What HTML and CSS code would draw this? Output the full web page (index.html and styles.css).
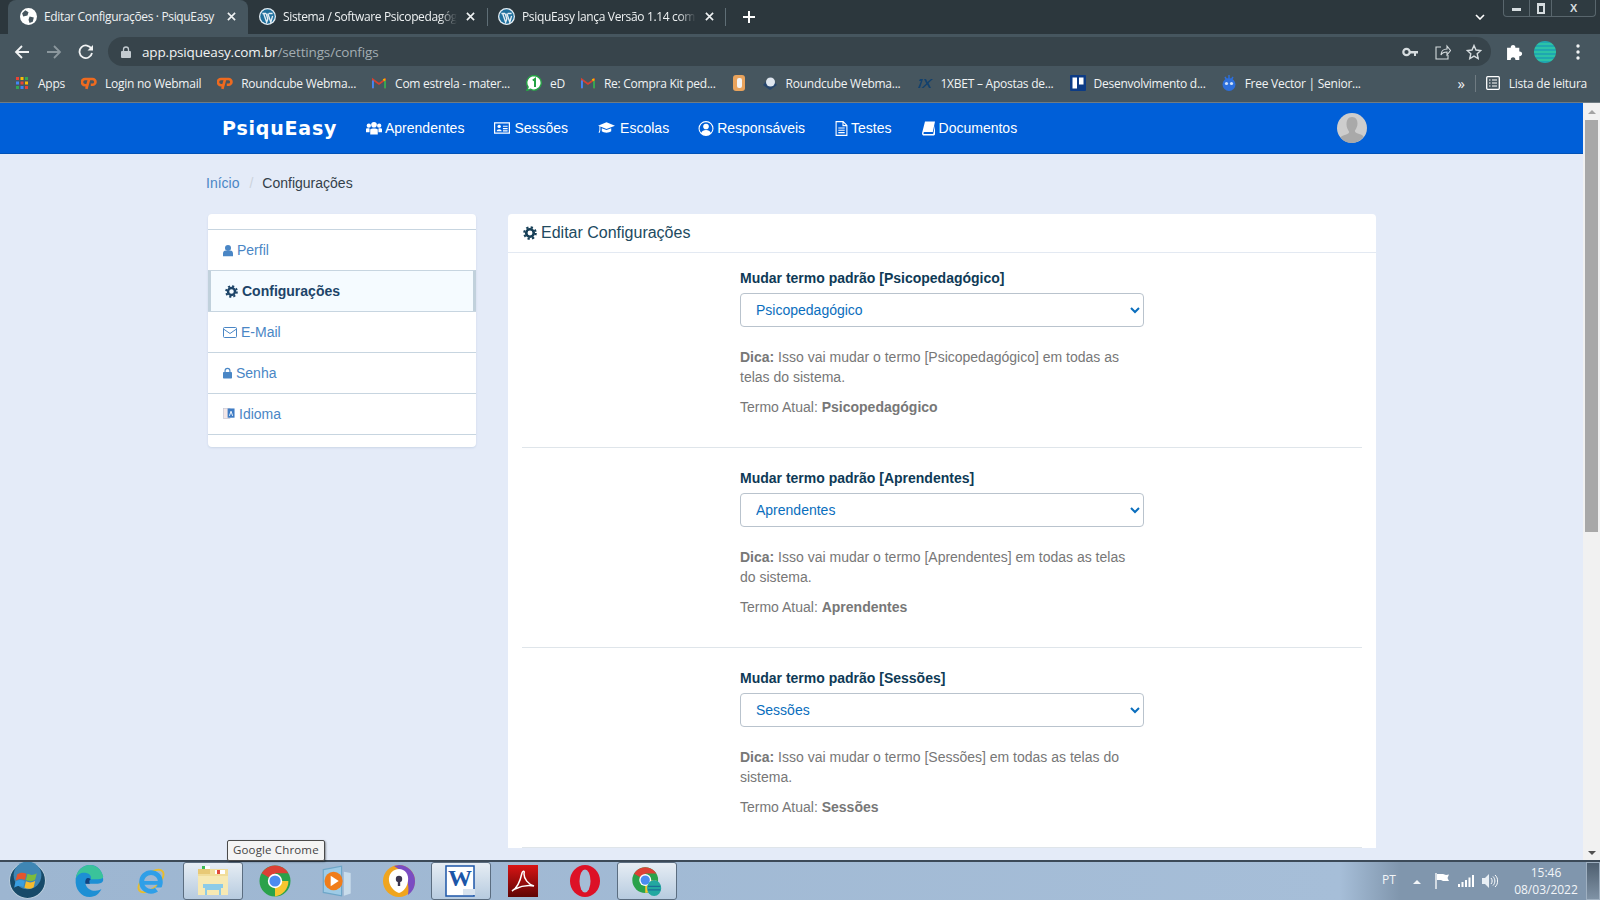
FILE: index.html
```html
<!DOCTYPE html>
<html lang="en">
<head>
    <meta charset="UTF-8">
    <meta name="viewport" content="width=device-width, initial-scale=1.0">
    <title>Editar Configurações · PsiquEasy</title>
    <link rel="stylesheet" href="styles.css">
</head>
<body>

<svg class="sprites" aria-hidden="true">
    <symbol id="i-wp" viewBox="0 0 16 16">
        <circle cx="8" cy="8" r="8" fill="#e4eef5"/>
        <circle cx="8" cy="8" r="6.800" fill="#1f6f9c"/>
        <path d="M3.200 5.200h3.400M9.200 5.200h3.600M4.400 5.200l2.800 8.200 1.100-3-1.500-5.200M8.300 5.200l2.800 8.200 1.700-6" stroke="#e4eef5" stroke-width="1.300" fill="none"/>
    </symbol>
    <symbol id="i-cp" viewBox="0 0 18 14">
        <path d="M8 2.500H4.500a3.500 3.500 0 0 0 0 7H7M6 13.500L9.200 2.500h3.800a3.200 3.200 0 0 1 0 6.500h-2" stroke="#ee6a1f" stroke-width="3" fill="none"/>
    </symbol>
    <symbol id="i-gm" viewBox="0 0 16 12">
        <path d="M1 12V2l7 5 7-5v10" fill="none" stroke="#d8402f" stroke-width="2"/>
        <path d="M1 12V3" stroke="#4285f4" stroke-width="2.400"/>
        <path d="M15 12V3" stroke="#34a853" stroke-width="2.400"/>
        <path d="M13 3l2-1.500" stroke="#f4b400" stroke-width="2.400"/>
    </symbol>
    <symbol id="i-chrome" viewBox="0 0 32 32">
        <circle cx="16" cy="16" r="15.500" fill="#2aa24a"/>
        <path d="M16 16L2.600 8.300A15.500 15.500 0 0 1 29.400 8.200H16z" fill="#dc4035"/>
        <path d="M16 16h13.400A15.500 15.500 0 0 1 16 31.500z" fill="#f7c62f"/>
        <circle cx="16" cy="16" r="7.200" fill="#fff"/>
        <circle cx="16" cy="16" r="5.600" fill="#4b8bf0"/>
    </symbol>
    <symbol id="i-cog" viewBox="0 0 16 16">
        <circle cx="8" cy="8" r="4.300" fill="none" stroke="currentColor" stroke-width="3"/>
        <circle cx="8" cy="8" r="6.600" fill="none" stroke="currentColor" stroke-width="2.400" stroke-dasharray="2.600 2.580"/>
    </symbol>
    <symbol id="i-user" viewBox="0 0 12 14">
        <circle cx="6" cy="4" r="3.600" fill="currentColor"/>
        <path d="M0 14v-3.500C0 8.500 1.500 7 3 7c1 .8 5 .8 6 0 1.500 0 3 1.500 3 3.500V14z" fill="currentColor"/>
    </symbol>
</svg>

<div class="browser-tabs">
    <div class="tab tab-active">
        <svg class="tab-icon" viewBox="0 0 16 16"><circle cx="8" cy="8" r="8" fill="#fff"/><path d="M5 2l3 2-1 3-4 1-1-3zM9 8l4 1-1 4-3 1-1-3z" fill="#46565f"/></svg>
        <span class="tab-title">Editar Configurações · PsiquEasy</span>
        <svg class="tab-close" viewBox="0 0 10 10"><path d="M1 1l8 8M9 1l-8 8"/></svg>
    </div>
    <div class="tab">
        <svg class="tab-icon"><use href="#i-wp"/></svg>
        <span class="tab-title tab-fade">Sistema / Software Psicopedagógico</span>
        <svg class="tab-close" viewBox="0 0 10 10"><path d="M1 1l8 8M9 1l-8 8"/></svg>
    </div>
    <div class="tab tab-sep">
        <svg class="tab-icon"><use href="#i-wp"/></svg>
        <span class="tab-title tab-fade">PsiquEasy lança Versão 1.14 com novidades</span>
        <svg class="tab-close" viewBox="0 0 10 10"><path d="M1 1l8 8M9 1l-8 8"/></svg>
    </div>
    <svg class="tab-plus" viewBox="0 0 12 12"><path d="M6 0v12M0 6h12"/></svg>
    <svg class="tab-list" viewBox="0 0 10 6"><path d="M1 1l4 4 4-4"/></svg>
    <div class="win-buttons">
        <span class="win-btn win-min"><i></i></span>
        <span class="win-btn win-max"><i></i></span>
        <span class="win-btn win-close">X</span>
    </div>
</div>

<div class="toolbar">
    <svg class="tool-nav" viewBox="0 0 16 16"><path d="M15 8H2M8 2L2 8l6 6"/></svg>
    <svg class="tool-nav tool-off" viewBox="0 0 16 16"><path d="M1 8h13M8 2l6 6-6 6"/></svg>
    <svg class="tool-nav" viewBox="0 0 16 16"><path d="M13.500 5A6.300 6.300 0 1 0 14 9"/><path class="solid" d="M15 1v5.500H9.500z"/></svg>
    <div class="omnibox">
        <svg class="omni-lock" viewBox="0 0 10 12"><path d="M2.500 5V3.500a2.500 2.500 0 0 1 5 0V5" fill="none" stroke="#c3cbd0" stroke-width="1.300"/><rect y="5" width="10" height="7" rx="1" fill="#c3cbd0"/></svg>
        <span class="omni-url">app.psiqueasy.com.br<span class="omni-path">/settings/configs</span></span>
        <svg class="omni-key" viewBox="0 0 16 10"><circle cx="4.500" cy="5" r="3.200" fill="none" stroke="#d6dcdf" stroke-width="2.200"/><path d="M8 4h8v2.500h-2V9h-2V6.500H8z" fill="#d6dcdf"/></svg>
        <svg class="omni-share" viewBox="0 0 16 16"><path d="M6 3H1v12h12v-4M6 11c0-4 3-6 6-6V2l3.500 4.500L12 11V8c-3 0-5 1-6 3z"/></svg>
        <svg class="omni-star" viewBox="0 0 16 16"><path d="M8 1.500l2 4.500 4.800.5-3.600 3.200 1 4.800L8 12.100 3.800 14.500l1-4.800L1.200 6.500 6 6z"/></svg>
    </div>
    <svg class="tool-puzzle" viewBox="0 0 16 16"><path d="M1 4.500h3.500a2.200 2.200 0 1 1 4.300 0H12.500V8a2.200 2.200 0 1 1 0 4.300V16H8.800a2.200 2.200 0 1 0-4.300 0H1z" fill="#fff"/></svg>
    <span class="tool-avatar"></span>
    <svg class="tool-dots" viewBox="0 0 4 16"><circle cx="2" cy="2" r="1.700"/><circle cx="2" cy="8" r="1.700"/><circle cx="2" cy="14" r="1.700"/></svg>
</div>

<div class="bookmarks">
    <a class="bm">
        <svg class="bm-icon" viewBox="0 0 14 14"><path d="M1 1h3v3H1z" fill="#ea4335"/><path d="M5.500 1h3v3h-3z" fill="#fbbc04"/><path d="M10 1h3v3h-3z" fill="#34a853"/><path d="M1 5.500h3v3H1z" fill="#4285f4"/><path d="M5.500 5.500h3v3h-3z" fill="#ea4335"/><path d="M10 5.500h3v3h-3z" fill="#fbbc04"/><path d="M1 10h3v3H1z" fill="#34a853"/><path d="M5.500 10h3v3h-3z" fill="#4285f4"/><path d="M10 10h3v3h-3z" fill="#ea4335"/></svg>Apps
    </a>
    <a class="bm"><svg class="bm-icon bm-wide"><use href="#i-cp"/></svg>Login no Webmail</a>
    <a class="bm"><svg class="bm-icon bm-wide"><use href="#i-cp"/></svg>Roundcube Webma...</a>
    <a class="bm"><svg class="bm-icon"><use href="#i-gm"/></svg>Com estrela - mater...</a>
    <a class="bm"><svg class="bm-icon bm-wide bm-tall" viewBox="0 0 16 16"><path d="M8 .5a7.300 7.300 0 1 1-3.600 13.700L.8 15.500l1.300-3.500A7.300 7.300 0 0 1 8 .5z" fill="#fff" stroke="#25a244" stroke-width="1.400"/><path d="M6.800 5.500L9 4v8" stroke="#25a244" stroke-width="2" fill="none"/></svg>eD</a>
    <a class="bm"><svg class="bm-icon"><use href="#i-gm"/></svg>Re: Compra Kit ped...</a>
    <a class="bm bm-iconly"><svg class="bm-icon bm-tall" viewBox="0 0 14 16"><rect x="1" width="12" height="16" rx="3" fill="#e9a35c"/><rect x="5" y="3" width="5" height="10" rx="2" fill="#f3f3f3"/></svg></a>
    <a class="bm"><svg class="bm-icon bm-wide bm-tall" viewBox="0 0 16 16"><path d="M1 10l7-8 7 8-7 5z" fill="#26456b"/><circle cx="8.500" cy="7" r="4.500" fill="#dfe6ee"/></svg>Roundcube Webma...</a>
    <a class="bm"><svg class="bm-icon bm-wide" viewBox="0 0 16 12"><path d="M1 11l3-7H2l1-2h3L3 11zM7 2h2l1.500 3L14 2h2l-4.500 4L14 11h-2l-1.800-3.500L6.500 11h-2l4.800-4.500z" fill="#12416e"/></svg>1XBET – Apostas de...</a>
    <a class="bm"><svg class="bm-icon bm-wide bm-tall" viewBox="0 0 16 16"><rect width="16" height="16" rx="1" fill="#0c3b85"/><rect x="2.500" y="2.500" width="4.500" height="11" fill="#fff"/><rect x="9" y="2.500" width="4.500" height="7" fill="#fff"/></svg>Desenvolvimento d...</a>
    <a class="bm"><svg class="bm-icon bm-tall" viewBox="0 0 14 16"><circle cx="7" cy="9.500" r="6.500" fill="#2d6fdc"/><path d="M7 3V0M3 2l1.500 2.500M11 2L9.500 4.500" stroke="#2d6fdc" stroke-width="1.500"/><circle cx="4.500" cy="8.500" r="1.600" fill="#cfe0fb"/><circle cx="9.500" cy="8.500" r="1.600" fill="#cfe0fb"/></svg>Free Vector | Senior...</a>
    <span class="bm-more">»</span>
    <span class="bm-sep"></span>
    <a class="bm bm-reading"><svg class="bm-icon" viewBox="0 0 14 14"><rect x=".7" y=".7" width="12.600" height="12.600" rx="1" fill="none" stroke="#fff" stroke-width="1.300"/><path d="M3 4h1.500M6 4h5M3 7h1.500M6 7h5M3 10h1.500M6 10h5" stroke="#fff" stroke-width="1.200"/></svg>Lista de leitura</a>
</div>

<div class="viewport">
    <div class="page">
        <nav class="topnav">
            <span class="logo">PsiquEasy</span>
            <a class="nav-link">
                <svg class="nav-icon" viewBox="0 0 17 14"><circle cx="8.500" cy="3.500" r="3"/><circle cx="3" cy="4.500" r="2.300"/><circle cx="14" cy="4.500" r="2.300"/><path d="M4.500 8.500c1-1.200 7-1.200 8 0V14h-8zM0 8c.6-.8 3.300-.8 3.800-.3v3.800H0zM13.200 7.700c.5-.5 3.200-.5 3.800.3v3.500h-3.800z"/></svg>Aprendentes
            </a>
            <a class="nav-link">
                <svg class="nav-icon nav-icon-card" viewBox="0 0 17 14"><path fill-rule="evenodd" d="M0 1h17v12H0zM1.300 2.300v9.400h14.400V2.300z"/><circle cx="5.500" cy="5.300" r="1.800"/><path d="M2.800 10.500c0-3 5.400-3 5.400 0zM9.500 4.500h5v1.200h-5zM9.500 7h5v1.200h-5zM9.500 9.500h5v1.200h-5z"/></svg>Sessões
            </a>
            <a class="nav-link nav-link-school">
                <svg class="nav-icon nav-icon-cap" viewBox="0 0 18 14"><path d="M9 1l9 3.500L9 8 2.500 5.500v3.800L1.800 12H.6l.9-2.700V5.100L0 4.500z"/><path d="M4 7.200v3.300c2 2 8 2 10 0V7.200L9 9.200z"/></svg>Escolas
            </a>
            <a class="nav-link">
                <svg class="nav-icon nav-icon-tight" viewBox="0 0 16 16"><path fill-rule="evenodd" d="M8 0a8 8 0 1 1 0 16A8 8 0 0 1 8 0zM8 1.300a6.700 6.700 0 0 0-5 11.200c.8-2 2.500-3 5-3s4.200 1 5 3A6.700 6.700 0 0 0 8 1.300z"/><circle cx="8" cy="5.800" r="3"/></svg>Responsáveis
            </a>
            <a class="nav-link">
                <svg class="nav-icon nav-icon-file" viewBox="0 0 12 15"><path d="M.6.600h7l3.800 3.800v10H.6zM7.500.600v4h4M2.800 7h6.400M2.800 9.300h6.400M2.800 11.600h6.400" fill="none" stroke="#fff" stroke-width="1.100"/></svg>Testes
            </a>
            <a class="nav-link">
                <svg class="nav-icon nav-icon-book" viewBox="0 0 13 14"><path d="M3 0h10l-2.200 10.500H3C1.500 10.500 1 11.500 1.800 12.500h9.400L13 4v9l-1 1H2C.5 14-.3 12.500.2 11z"/></svg>Documentos
            </a>
            <span class="nav-avatar"><svg viewBox="0 0 30 30"><circle cx="15" cy="15" r="15" fill="#cdcdcd"/><path d="M15 4c3.600 0 5.500 2.800 5.500 6.200 0 3-1.200 5.600-2.500 7.200-.5 1.500 1 2.800 5 3.800 2 .6 3 1.500 3.500 2.500A15 15 0 0 1 15 30 15 15 0 0 1 3.500 24.700c.5-1 1.500-1.900 3.500-2.500 4-1 5.500-2.300 5-3.800-1.300-1.600-2.500-4.200-2.500-7.200C9.500 6.800 11.400 4 15 4z" fill="#a9a9a9"/></svg></span>
        </nav>

        <div class="breadcrumb">
            <a>Início</a><span class="crumb-sep">/</span><span class="crumb-current">Configurações</span>
        </div>

        <div class="settings">
            <aside class="side-menu">
                <ul>
                    <li><svg class="side-icon"><use href="#i-user"/></svg>Perfil</li>
                    <li class="active"><svg class="side-icon side-cog"><use href="#i-cog"/></svg>Configurações</li>
                    <li><svg class="side-icon side-mail" viewBox="0 0 14 11"><rect x=".5" y=".5" width="13" height="10" rx="1" fill="none" stroke="currentColor"/><path d="M.5 2l6.500 4.500L13.500 2" fill="none" stroke="currentColor"/></svg>E-Mail</li>
                    <li><svg class="side-icon side-lock" viewBox="0 0 10 12"><path d="M2.300 5.500V3.500a2.700 2.700 0 0 1 5.400 0v2" fill="none" stroke="currentColor" stroke-width="1.300"/><rect y="5" width="10" height="7" rx=".8" fill="currentColor"/></svg>Senha</li>
                    <li><svg class="side-icon side-lang" viewBox="0 0 13 14"><rect x=".5" y="1" width="7" height="11" fill="#f4e7e7" stroke="#c9c9d6" stroke-width=".8"/><rect x="5" y="1" width="7.500" height="10" fill="#3f7cc4"/><path d="M7 9l1.700-5 1.700 5" fill="none" stroke="#fff"/></svg>Idioma</li>
                </ul>
            </aside>

            <section class="card">
                <h1 class="card-title"><svg class="card-cog"><use href="#i-cog"/></svg>Editar Configurações</h1>
                <div class="card-body">
                    <div class="setting">
                        <label class="setting-label">Mudar termo padrão [Psicopedagógico]</label>
                        <select class="setting-select"><option>Psicopedagógico</option></select>
                        <p class="setting-tip"><b>Dica:</b> Isso vai mudar o termo [Psicopedagógico] em todas as telas do sistema.</p>
                        <p class="setting-now">Termo Atual: <b>Psicopedagógico</b></p>
                    </div>
                    <div class="setting">
                        <label class="setting-label">Mudar termo padrão [Aprendentes]</label>
                        <select class="setting-select"><option>Aprendentes</option></select>
                        <p class="setting-tip"><b>Dica:</b> Isso vai mudar o termo [Aprendentes] em todas as telas do sistema.</p>
                        <p class="setting-now">Termo Atual: <b>Aprendentes</b></p>
                    </div>
                    <div class="setting">
                        <label class="setting-label">Mudar termo padrão [Sessões]</label>
                        <select class="setting-select"><option>Sessões</option></select>
                        <p class="setting-tip"><b>Dica:</b> Isso vai mudar o termo [Sessões] em todas as telas do sistema.</p>
                        <p class="setting-now">Termo Atual: <b>Sessões</b></p>
                    </div>
                </div>
            </section>
        </div>
    </div>

    <div class="scrollbar">
        <span class="sb-up"></span>
        <span class="sb-thumb"></span>
        <span class="sb-down"></span>
    </div>
</div>

<div class="taskbar">
    <span class="tb-tooltip">Google Chrome</span>
    <div class="tb-start">
        <svg viewBox="0 0 36 36">
            <circle cx="18" cy="18" r="17.500" fill="#174a69" stroke="#b9ccdc"/>
            <circle cx="18" cy="13" r="13.500" fill="#3f86b4"/>
            <path d="M8 12c3-2 6-2 9-.5l-1.500 6c-3-1.500-6-1.500-9 .5z" fill="#e4552d"/>
            <path d="M18 11.500c3 1.500 6 1.500 9-.5l-1.500 6c-3 2-6 2-9 .5z" fill="#7dbb3c"/>
            <path d="M6.300 19c3-2 6-2 9-.5L14 24.500c-3-1.500-6-1.500-9 .5z" fill="#3a9ee0"/>
            <path d="M16.500 18.800c3 1.500 6 1.500 9-.5L24 24.500c-3 2-6 2-9 .5z" fill="#f6bb2e"/>
        </svg>
    </div>
    <div class="tb-apps">
        <span class="tb-slot"><svg viewBox="0 0 32 36"><path d="M1 16C2 6 9 0 17 0c9 0 15 7 15 17 0 2-2 4-6 4H12c1 5 6 8 11 8 3 0 5-1 7-2-2 5-7 9-13 9C7 36 0 27 1 16z" fill="#1d8fd4"/><path d="M1 16C3 9 9 8 13 9c5 1 6 5 5 7h8c4 0 6-1 6-3C30 5 24 0 17 0 9 0 2 6 1 16z" fill="#3ac39a"/><path d="M12 21c-1-6 3-8 6-5-2 1-2 3-1 5z" fill="#12427e"/></svg></span>
        <span class="tb-slot"><svg viewBox="0 0 32 34"><ellipse cx="16" cy="17" rx="16" ry="8" transform="rotate(-40 16 17)" fill="none" stroke="#e9bd2b" stroke-width="2"/><circle cx="16" cy="18" r="10" fill="none" stroke="#2f9fe8" stroke-width="5"/><path d="M7 17h18v4H7z" fill="#2f9fe8"/><path d="M20 24l8 0-4 5z" fill="#a5bdd6"/></svg></span>
        <span class="tb-slot tb-open"><svg viewBox="0 0 32 32"><path d="M1 4h30v26H1z" fill="#f1dd9a"/><path d="M1 4h12v5H1z" fill="#e8c976"/><path d="M5 1h8v3H5z" fill="#fff"/><path d="M5 1h3v3H5z" fill="#3dbb54"/><path d="M18 5h10v4H18z" fill="#fff"/><path d="M20 5h3v4h-3z" fill="#e04a3c"/><path d="M1 11h30v19H1z" fill="#f7e9b3"/><path d="M6 19h20v4h-2v7h-2v-5H10v5H8v-7H6z" fill="#8ccbe8"/></svg></span>
        <span class="tb-slot"><svg><use href="#i-chrome"/></svg></span>
        <span class="tb-slot"><svg viewBox="0 0 28 28"><path d="M2 4l16-3v26L2 24z" fill="#9ecbe6" stroke="#6ea6c8"/><path d="M20 6l6 1v18l-6 2z" fill="#c8dceb"/><circle cx="11" cy="14" r="8" fill="#f07d1a"/><path d="M8.500 9.500l7 4.500-7 4.500z" fill="#fff"/></svg></span>
        <span class="tb-slot"><svg viewBox="0 0 32 32"><circle cx="16" cy="16" r="16" fill="#f0a51e"/><path d="M16 0a16 16 0 0 1 16 16c0 7-3 11-7 14 2-12-2-22-14-29z" fill="#7a4cc2"/><path d="M16 4c6 0 10 5 9 12-1 6-4 10-9 12-5-2-9-6-10-12C5 9 10 4 16 4z" fill="#fff"/><circle cx="16" cy="14" r="3.200" fill="#3a3550"/><path d="M14.800 15h2.400v6h-2.400z" fill="#3a3550"/></svg></span>
        <span class="tb-slot tb-open"><svg viewBox="0 0 32 32"><rect x="1" y="1" width="28" height="30" fill="#fff" stroke="#1c56a8" stroke-width="1.500"/><text class="tb-word" x="3" y="21">W</text><path d="M18 24h12v6H18z" fill="#d8e3ee"/></svg></span>
        <span class="tb-slot"><svg viewBox="0 0 30 32"><defs><linearGradient id="pdf-red" x1="0" y1="0" x2="0" y2="1"><stop offset="0" stop-color="#d91414"/><stop offset="1" stop-color="#5f0505"/></linearGradient></defs><rect width="30" height="32" fill="url(#pdf-red)"/><path d="M4 26c4-2 8-9 10-18 1-3 3-2 2 1 0 5 4 10 10 12-6-1-13 0-19 3z" fill="none" stroke="#fff" stroke-width="1.500"/></svg></span>
        <span class="tb-slot"><svg viewBox="0 0 30 32"><ellipse cx="15" cy="16" rx="15" ry="16" fill="#dd1126"/><ellipse cx="15" cy="16" rx="5.500" ry="11.500" fill="#a5bdd6"/></svg></span>
        <span class="tb-slot tb-open"><svg class="tb-chrome-user" viewBox="0 0 34 36"><use href="#i-chrome" width="30" height="30" y="2"/><ellipse cx="25" cy="26" rx="8" ry="9" fill="#23a8a0"/><path d="M18 24h14M18 28h14" stroke="#1a6f97" stroke-width="1.500"/></svg></span>
    </div>
    <div class="tb-tray">
        <span class="tray-lang">PT</span>
        <svg class="tray-caret" viewBox="0 0 10 6"><path d="M5 0l5 5H0z"/></svg>
        <svg class="tray-icon" viewBox="0 0 16 16"><path d="M2 0v16" stroke="#fff" stroke-width="1.300"/><path d="M3 1h6l3 1 3-.500-1.500 3.500L15 8H9L7 7H3z" fill="#fff"/></svg>
        <svg class="tray-icon" viewBox="0 0 16 12"><path d="M0 9h2v3H0zM3.500 7h2v5h-2zM7 5h2v7H7zM10.500 2.500h2V12h-2zM14 0h2v12h-2z" fill="#fff"/></svg>
        <svg class="tray-icon" viewBox="0 0 16 14"><path d="M0 4h3l4-4v14l-4-4H0z" fill="#e8eef4"/><path d="M9 4c1.500 1.500 1.500 4.500 0 6M11 2.500c2.500 2.500 2.500 6.500 0 9M13 1c3.500 3 3.500 9 0 12" fill="none" stroke="#fff"/></svg>
        <span class="tray-clock">15:46<br>08/03/2022</span>
        <span class="tray-desktop"></span>
    </div>
</div>

</body>
</html>
```

FILE: styles.css
```css
* {
    box-sizing: border-box;
}
html, body {
    height: 100%;
}
body {
    display: flex;
    flex-direction: column;
    height: 900px;
    margin: 0;
    overflow: hidden;
    font-family: "Liberation Sans", Arial, sans-serif;
    font-size: 14px;
    background-color: #e4ebf8;
}
.sprites {
    display: none;
}

/* browser tab strip */
.browser-tabs {
    display: flex;
    align-items: center;
    flex: none;
    height: 34px;
    padding-left: 8px;
    background-color: #2c373d;
    font-family: "Open Sans", sans-serif;
    font-size: 12px;
    letter-spacing: -0.35px;
    color: #eef1f2;
}
.tab {
    position: relative;
    display: flex;
    align-items: center;
    width: 239px;
    height: 34px;
    padding: 0 10px 2px 11px;
}
.tab-active {
    width: 240px;
    padding-left: 12px;
    background-color: #46565f;
    border-radius: 8px 8px 0 0;
}
.tab-sep::before,
.tab-sep::after {
    content: "";
    position: absolute;
    top: 8px;
    height: 18px;
    width: 1px;
    background-color: #5f6e76;
}
.tab-sep::before {
    left: 0;
}
.tab-sep::after {
    right: 0;
}
.tab-icon {
    flex: none;
    width: 17px;
    height: 17px;
    margin-right: 7px;
}
.tab-title {
    flex: 1;
    overflow: hidden;
    white-space: nowrap;
}
.tab-fade {
    -webkit-mask-image: linear-gradient(to right, #000 90%, transparent);
    mask-image: linear-gradient(to right, #000 90%, transparent);
}
.tab-close {
    flex: none;
    width: 9px;
    height: 9px;
    margin-left: 9px;
    margin-right: 2px;
    fill: none;
    stroke: #eef1f2;
    stroke-width: 1.8;
}
.tab-plus {
    width: 12px;
    height: 12px;
    margin-left: 17px;
    fill: none;
    stroke: #fff;
    stroke-width: 2;
}
.tab-list {
    width: 10px;
    height: 6px;
    margin-left: auto;
    margin-right: 18px;
    fill: none;
    stroke: #fff;
    stroke-width: 1.6;
}
.win-buttons {
    display: flex;
    align-self: flex-start;
    height: 17px;
    margin-right: 4px;
    border: 1px solid #59666d;
    border-top: none;
    border-radius: 0 0 4px 4px;
    background-color: #2f3b41;
}
.win-btn {
    display: flex;
    align-items: center;
    justify-content: center;
    height: 16px;
    color: #d6dcdf;
    font-family: "Liberation Sans", sans-serif;
    font-size: 11px;
    font-weight: bold;
    border-right: 1px solid #59666d;
}
.win-min {
    width: 26px;
}
.win-min i {
    width: 9px;
    height: 3px;
    margin-top: 3px;
    background-color: #d6dcdf;
}
.win-max {
    width: 22px;
}
.win-max i {
    width: 8px;
    height: 11px;
    border: 2px solid #d6dcdf;
    border-top-width: 3px;
}
.win-close {
    width: 43px;
    border-right: none;
}

/* address bar */
.toolbar {
    display: flex;
    align-items: center;
    flex: none;
    height: 33px;
    padding: 2px 0 0 14px;
    background-color: #46565f;
}
.tool-nav {
    flex: none;
    width: 16px;
    height: 16px;
    margin-right: 16px;
    fill: none;
    stroke: #f1f3f4;
    stroke-width: 1.800;
}
.tool-nav .solid {
    fill: #f1f3f4;
    stroke: none;
}
.tool-off {
    stroke: #8b979d;
}
.omnibox {
    display: flex;
    align-items: center;
    width: 1383px;
    height: 29px;
    margin-left: -2px;
    padding: 0 9px 0 13px;
    border-radius: 15px;
    background-color: #37444b;
}
.omni-lock {
    width: 10px;
    height: 12px;
    margin-right: 11px;
}
.omni-url {
    flex: 1;
    font-family: "Open Sans", sans-serif;
    font-size: 13.500px;
    letter-spacing: -0.15px;
    color: #f1f3f4;
}
.omni-path {
    color: #a3adb2;
}
.omni-key {
    width: 16px;
    height: 10px;
    margin-right: 17px;
}
.omni-share,
.omni-star {
    width: 16px;
    height: 16px;
    fill: none;
    stroke: #d6dcdf;
    stroke-width: 1.100;
}
.omni-share {
    margin-right: 15px;
}
.omni-star {
    stroke-width: 1.400;
}
.tool-puzzle {
    width: 17px;
    height: 17px;
    margin-left: 15px;
}
.tool-avatar {
    width: 22px;
    height: 22px;
    margin-left: 11px;
    border-radius: 50%;
    background: repeating-linear-gradient(#1fa7b0 0 2px, #2cc2a7 2px 4px);
}
.tool-dots {
    width: 4px;
    height: 16px;
    margin-left: 20px;
    fill: #f1f3f4;
}

/* bookmarks bar */
.bookmarks {
    display: flex;
    align-items: center;
    flex: none;
    height: 36px;
    padding: 0 13px 3px 15px;
    background-color: #46565f;
    border-bottom: 1px solid #6f7b82;
    font-family: "Open Sans", sans-serif;
    font-size: 12px;
    letter-spacing: -0.25px;
    color: #f1f3f4;
    white-space: nowrap;
}
.bm {
    display: flex;
    align-items: center;
    margin-right: 16px;
}
.bm-icon {
    flex: none;
    width: 14px;
    height: 14px;
    margin-right: 9px;
}
.bm-wide {
    width: 16px;
    margin-right: 8px;
}
.bm-tall {
    height: 16px;
}
.bm-iconly .bm-icon {
    margin-right: 0;
}
.bm-more {
    margin-left: auto;
    margin-right: 10px;
    font-size: 15px;
}
.bm-sep {
    width: 1px;
    height: 17px;
    margin-right: 10px;
    background-color: #6f7b82;
}
.bm-reading {
    margin-right: 0;
}

/* page viewport */
.viewport {
    display: flex;
    flex: 1;
    min-height: 0;
}
.page {
    flex: 1;
    min-width: 0;
    overflow: hidden;
}
.scrollbar {
    display: flex;
    flex-direction: column;
    align-items: center;
    flex: none;
    width: 17px;
    padding-top: 7px;
    background-color: #f1f1f1;
}
.sb-up,
.sb-down {
    width: 0;
    height: 0;
    border-left: 4px solid transparent;
    border-right: 4px solid transparent;
}
.sb-up {
    border-bottom: 4px solid #a3a3a3;
}
.sb-down {
    margin-top: auto;
    margin-bottom: 5px;
    border-top: 4px solid #505050;
}
.sb-thumb {
    width: 13px;
    height: 412px;
    margin-top: 6px;
    background-color: #a8a8a8;
}

/* site navbar */
.topnav {
    display: flex;
    align-items: center;
    height: 51px;
    padding: 0 216px 0 222px;
    background-color: #005fd8;
    border-bottom: 1px solid #0052b8;
    color: #fff;
}
.logo {
    width: 144px;
    font-family: "DejaVu Sans", sans-serif;
    font-size: 19px;
    font-weight: bold;
    letter-spacing: 0.8px;
}
.nav-link {
    display: flex;
    align-items: center;
    margin-right: 30px;
    white-space: nowrap;
}
.nav-link-school {
    margin-right: 29px;
}
.nav-icon {
    width: 16px;
    height: 14px;
    margin-right: 3px;
    fill: #fff;
}
.nav-icon-card {
    margin-right: 4px;
}
.nav-icon-cap {
    width: 17px;
    margin-right: 5px;
}
.nav-icon-tight {
    height: 15px;
}
.nav-icon-file {
    width: 13px;
    height: 15px;
}
.nav-icon-book {
    width: 13px;
    height: 15px;
    margin-right: 4px;
}
.nav-avatar {
    width: 30px;
    height: 30px;
    margin-left: auto;
}
.nav-avatar svg {
    display: block;
    width: 30px;
    height: 30px;
}

/* breadcrumb */
.breadcrumb {
    display: flex;
    height: 20px;
    margin: 19px 0 21px 206px;
    line-height: 20px;
    color: #333f4a;
}
.breadcrumb a {
    color: #4a86c5;
}
.crumb-sep {
    margin: 0 9px 0 10px;
    color: #ccd3dc;
}

/* two columns */
.settings {
    display: flex;
    align-items: flex-start;
    gap: 32px;
    margin-left: 208px;
}
.side-menu {
    flex: none;
    width: 268px;
    height: 233px;
    padding-top: 15px;
    background-color: #fff;
    border-radius: 4px;
    box-shadow: 0 1px 2px rgba(70, 100, 140, 0.15);
}
.side-menu ul {
    margin: 0;
    padding: 0;
    list-style: none;
    border-bottom: 1px solid #c7d5e0;
}
.side-menu li {
    display: flex;
    align-items: center;
    height: 41px;
    padding-left: 15px;
    border-top: 1px solid #c7d5e0;
    color: #4a86c5;
}
.side-menu li.active {
    padding-left: 14px;
    border-left: 3px solid #c1d1dc;
    border-right: 3px solid #c1d1dc;
    background-color: #f5fbff;
    color: #1d4468;
    font-weight: bold;
}
.side-icon {
    flex: none;
    width: 10px;
    height: 13px;
    margin-right: 4px;
}
.side-cog {
    width: 13px;
    height: 13px;
    margin-right: 4px;
}
.side-mail {
    width: 14px;
    height: 11px;
}
.side-lock {
    width: 9px;
    height: 12px;
}
.side-lang {
    width: 12px;
    height: 14px;
}

/* form card */
.card {
    flex: none;
    width: 868px;
    background-color: #fff;
    border-radius: 4px 4px 0 0;
}
.card-title {
    display: flex;
    align-items: center;
    height: 39px;
    margin: 0;
    padding: 0 0 1px 15px;
    border-bottom: 1px solid #e3e9f2;
    font-size: 16px;
    font-weight: normal;
    color: #214a60;
}
.card-cog {
    width: 14px;
    height: 14px;
    margin-right: 4px;
    color: #173f57;
}
.card-body {
    padding: 0 14px;
}
.setting {
    padding: 20px 0 30px 218px;
    border-bottom: 1px solid #dfe5ea;
}
.setting:first-child {
    padding-top: 15px;
}
.setting-label {
    display: block;
    height: 20px;
    line-height: 20px;
    font-weight: bold;
    color: #0e3a56;
}
.setting-select {
    display: block;
    width: 404px;
    height: 34px;
    margin-top: 5px;
    padding: 0 11px;
    border: 1px solid #b9c3cd;
    border-radius: 4px;
    background-color: #fff;
    font-family: inherit;
    font-size: 14px;
    color: #0a6ebd;
}
.setting-tip,
.setting-now {
    width: 404px;
    margin: 0;
    line-height: 20px;
    color: #777;
}
.setting-tip {
    margin-top: 20px;
}
.setting-now {
    margin-top: 10px;
}

/* windows taskbar */
.taskbar {
    position: relative;
    display: flex;
    flex: none;
    height: 40px;
    border-top: 2px solid #3c4a58;
    background: linear-gradient(to right, #9db6d1 0, #a6bed8 1340px, #8096ad 1400px, #8096ad 100%);
    font-family: "Open Sans", sans-serif;
    font-size: 12px;
    color: #f2f5f8;
}
.tb-tooltip {
    position: absolute;
    left: 227px;
    top: -22px;
    height: 21px;
    padding: 0 5px;
    line-height: 18px;
    border: 1px solid #4a4a4a;
    border-radius: 2px;
    background-color: #f4f4f4;
    box-shadow: 1px 1px 2px rgba(0, 0, 0, 0.4);
    color: #444;
    font-size: 11.500px;
    letter-spacing: 0.15px;
}
.tb-start {
    flex: none;
    width: 59px;
    padding: 0 0 0 9px;
}
.tb-start svg {
    display: block;
    width: 37px;
    height: 37px;
}
.tb-apps {
    display: flex;
    gap: 2px;
}
.tb-slot {
    display: flex;
    align-items: center;
    justify-content: center;
    width: 60px;
    height: 38px;
}
.tb-slot svg {
    width: 32px;
    height: 32px;
}
.tb-open {
    border: 1px solid #5b6d80;
    border-radius: 3px;
    background: linear-gradient(#e6edf4, #b7cbdf);
}
.tb-word {
    font-family: "Liberation Serif", serif;
    font-size: 24px;
    font-weight: bold;
    fill: #1c56a8;
}
.tb-tray {
    display: flex;
    align-items: center;
    margin-left: auto;
}
.tray-lang {
    width: 31px;
    margin-top: -4px;
}
.tray-caret {
    width: 8px;
    height: 5px;
    margin-right: 13px;
    margin-top: 3px;
    fill: #f2f5f8;
}
.tray-icon {
    width: 16px;
    height: 16px;
    margin-right: 8px;
}
.tray-clock {
    width: 80px;
    line-height: 17px;
    text-align: center;
}
.tray-desktop {
    align-self: stretch;
    width: 14px;
    border: 1px solid #9fb0c1;
    background: linear-gradient(#4e5f70, #7f92a5);
}
```
